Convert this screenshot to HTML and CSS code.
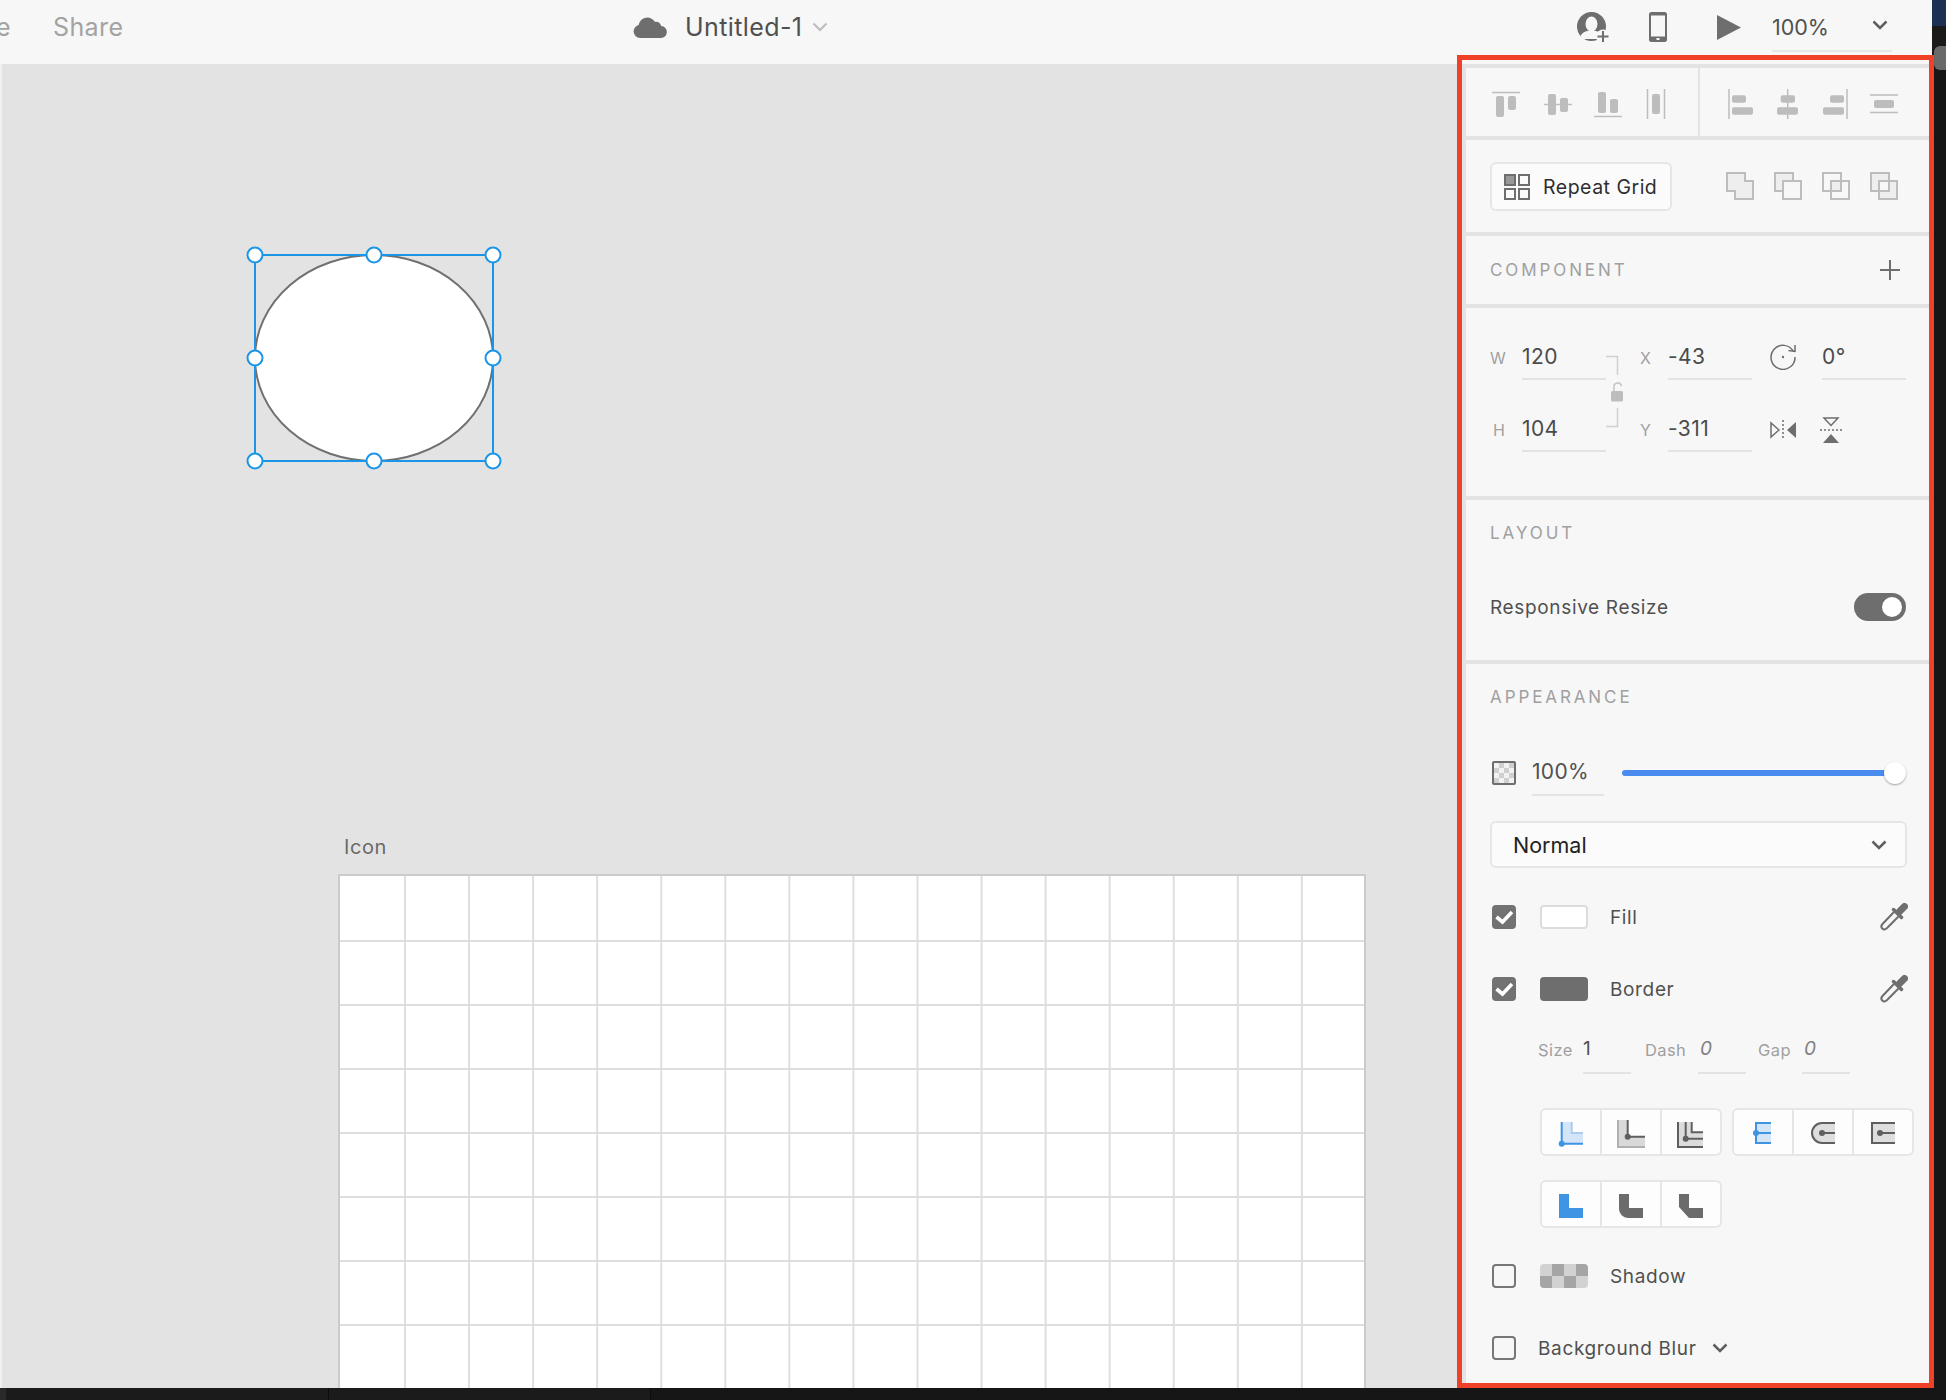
FILE: index.html
```html
<!DOCTYPE html>
<html lang="en">

<head>
  <meta charset="utf-8">
  <title>Untitled-1</title>
  <link rel="stylesheet" href="styles.css">
</head>

<body>
  <div id="app">
    <div id="toprow">
      <header id="topbar">
        <span class="tab tab-cut">e</span>
        <span class="tab">Share</span>
        <div id="doctitle">
          <svg class="cloud" width="34" height="22" viewBox="0 0 34 22"><path d="M7 22A6.6 6.6 0 0 1 5.6 9 9.6 9.6 0 0 1 14 1.4c3.400 0 6.300 1.700 7.800 4.400A5.800 5.800 0 0 1 28.200 10 6 6 0 0 1 27.500 22Z" fill="#6e6e6e"/></svg>
          <span id="docname">Untitled-1</span>
          <svg width="16" height="10" viewBox="0 0 16 10"><path d="M1.500 1.500 8 8l6.500-6.500" fill="none" stroke="#bdbdbd" stroke-width="2"/></svg>
        </div>
        <div id="topright">
          <svg class="person" width="33" height="30" viewBox="0 0 33 30"><circle cx="14.500" cy="14.500" r="14.500" fill="#6e6e6e"/><ellipse cx="14.500" cy="12" rx="6" ry="7.500" fill="#f7f7f7"/><path d="M3.500 24c2-4 6-5.500 11-5.500s9 1.500 11 5.500l-3 3H6Z" fill="#f7f7f7"/><circle cx="26" cy="24.500" r="7" fill="#f7f7f7"/><path d="M26 19v11M20.500 24.500h11" stroke="#6e6e6e" stroke-width="2"/></svg>
          <svg class="phone" width="18" height="30" viewBox="0 0 18 30"><rect width="18" height="30" rx="2.500" fill="#6e6e6e"/><rect x="2" y="3.500" width="14" height="21" fill="#f7f7f7"/><rect x="7.500" y="26" width="3" height="2" fill="#f7f7f7"/></svg>
          <svg class="play" width="24" height="25" viewBox="0 0 24 25"><path d="M0 0 24 12.500 0 25Z" fill="#6e6e6e"/></svg>
          <div id="zoomfield">
            <span>100%</span>
            <svg width="16" height="10" viewBox="0 0 16 10"><path d="M1.500 1.500 8 8l6.500-6.500" fill="none" stroke="#5f5f5f" stroke-width="2.500"/></svg>
          </div>
        </div>
      </header>
      <div id="topstrip"></div>
    </div>

    <div id="mainrow">
      <main id="canvas">
        <div id="canvasedge"></div>
        <svg id="selection" width="270" height="240" viewBox="0 0 270 240">
          <ellipse cx="134" cy="118" rx="119" ry="103" fill="#fff" stroke="#707070" stroke-width="2"/>
          <rect x="15" y="15" width="238" height="206" fill="none" stroke="#1b95e6" stroke-width="2"/>
          <g fill="#fff" stroke="#1b95e6" stroke-width="2">
            <circle cx="15" cy="15" r="7.500"/>
            <circle cx="134" cy="15" r="7.500"/>
            <circle cx="253" cy="15" r="7.500"/>
            <circle cx="15" cy="118" r="7.500"/>
            <circle cx="253" cy="118" r="7.500"/>
            <circle cx="15" cy="221" r="7.500"/>
            <circle cx="134" cy="221" r="7.500"/>
            <circle cx="253" cy="221" r="7.500"/>
          </g>
        </svg>
        <div id="artboardname">Icon</div>
        <div id="artboard"></div>
      </main>

      <aside id="panel">
        <section class="section sec-align">
          <div class="aligngroup group-a">
            <svg class="ico32" viewBox="0 0 32 32"><path d="M2 4.500h28" stroke="#bdbdbd" stroke-width="1.500"/><rect x="6" y="8" width="8" height="21" rx="2"/><rect x="18" y="8" width="8" height="14" rx="2"/></svg>
            <svg class="ico32" viewBox="0 0 32 32"><path d="M4 16.500h28" stroke="#bdbdbd" stroke-width="1.500"/><rect x="8" y="6" width="8" height="21" rx="2"/><rect x="20" y="10" width="8" height="14" rx="2"/></svg>
            <svg class="ico32" viewBox="0 0 32 32"><path d="M4 28.500h28" stroke="#bdbdbd" stroke-width="1.500"/><rect x="8" y="4" width="8" height="21" rx="2"/><rect x="20" y="11" width="8" height="14" rx="2"/></svg>
            <svg class="ico32" viewBox="0 0 32 32"><path d="M7.500 1v30M24.500 1v30" stroke="#bdbdbd" stroke-width="1.500"/><rect x="12" y="6" width="8" height="20" rx="2"/></svg>
          </div>
          <div class="aligngroup group-b">
            <svg class="ico32" viewBox="0 0 32 32"><path d="M5 1v30" stroke="#bdbdbd" stroke-width="1.500"/><rect x="8" y="7.300" width="14" height="7.500" rx="2"/><rect x="8" y="19.300" width="21" height="7.500" rx="2"/></svg>
            <svg class="ico32" viewBox="0 0 32 32"><path d="M15.700 1v30" stroke="#bdbdbd" stroke-width="1.500"/><rect x="8.700" y="7.300" width="14.300" height="7.500" rx="2"/><rect x="5" y="19.300" width="21" height="7.500" rx="2"/></svg>
            <svg class="ico32" viewBox="0 0 32 32"><path d="M27 1v30" stroke="#bdbdbd" stroke-width="1.500"/><rect x="10" y="7.300" width="14" height="7.500" rx="2"/><rect x="3" y="19.300" width="21" height="7.500" rx="2"/></svg>
            <svg class="ico32" viewBox="0 0 32 32"><path d="M2 7h28M2 24.500h28" stroke="#bdbdbd" stroke-width="1.500"/><rect x="6" y="12" width="20" height="8" rx="2"/></svg>
          </div>
        </section>

        <section class="section sec-repeat">
          <button class="repeatbtn">
            <svg width="26" height="26" viewBox="0 0 26 26"><g fill="none" stroke="#6e6e6e" stroke-width="2"><rect x="1" y="1" width="10" height="10" fill="#999"/><rect x="15" y="1" width="10" height="10"/><rect x="1" y="15" width="10" height="10"/><rect x="15" y="15" width="10" height="10"/></g></svg>
            <span>Repeat Grid</span>
          </button>
          <div class="boolgroup">
            <svg class="ico28" viewBox="0 0 28 28"><path d="M1 1h18v8h8v18H9v-8H1Z" fill="#eee" stroke="#bdbdbd" stroke-width="2"/></svg>
            <svg class="ico28" viewBox="0 0 28 28"><rect x="1" y="1" width="18" height="18" fill="#eee" stroke="#bdbdbd" stroke-width="2"/><rect x="9" y="9" width="18" height="18" fill="#f7f7f7" stroke="#bdbdbd" stroke-width="2"/></svg>
            <svg class="ico28" viewBox="0 0 28 28"><rect x="9" y="9" width="10" height="10" fill="#eee"/><g fill="none" stroke="#bdbdbd" stroke-width="2"><rect x="1" y="1" width="18" height="18"/><rect x="9" y="9" width="18" height="18"/></g></svg>
            <svg class="ico28" viewBox="0 0 28 28"><path d="M1 1h18v8H9v10H1Z" fill="#eee"/><path d="M19 9h8v18H9v-8h10Z" fill="#eee"/><g fill="none" stroke="#bdbdbd" stroke-width="2"><rect x="1" y="1" width="18" height="18"/><rect x="9" y="9" width="18" height="18"/></g></svg>
          </div>
        </section>

        <section class="section sec-component">
          <h2 class="heading">COMPONENT</h2>
          <svg width="20" height="20" viewBox="0 0 20 20"><path d="M10 0v20M0 10h20" stroke="#6e6e6e" stroke-width="2"/></svg>
        </section>

        <section class="section sec-transform">
          <div class="xform">
            <span class="xlabel lab-w">W</span>
            <span class="field f-w">120</span>
            <svg class="link" width="24" height="116" viewBox="0 0 24 116">
              <path d="M0 20.500h11.500V39M11.500 72v18.500H0" fill="none" stroke="#cfcfcf" stroke-width="1.500"/>
              <path d="M8 56v-5a3.800 3.800 0 0 1 7.500-1" fill="none" stroke="#c4c4c4" stroke-width="1.500"/>
              <rect x="5" y="55" width="12" height="10.500" rx="1.500" fill="#bdbdbd"/>
            </svg>
            <span class="xlabel lab-x">X</span>
            <span class="field f-x">-43</span>
            <svg class="rot" width="26" height="26" viewBox="0 0 26 26"><path d="M23.500 7.500A12 12 0 1 0 25 13" fill="none" stroke="#6e6e6e" stroke-width="1.500"/><path d="M18.500 6.500 25 7.500V1" fill="none" stroke="#6e6e6e" stroke-width="1.500"/><circle cx="13" cy="13" r="1.200" fill="#6e6e6e"/></svg>
            <span class="field f-r">0°</span>

            <span class="xlabel lab-h">H</span>
            <span class="field f-h">104</span>
            <span class="xlabel lab-y">Y</span>
            <span class="field f-y">-311</span>
            <div class="flips">
              <svg width="26" height="20" viewBox="0 0 26 20"><path d="M1 3v14l8-7Z" fill="none" stroke="#6e6e6e" stroke-width="1.500"/><path d="M26 2v16l-9-8Z" fill="#6e6e6e"/><path d="M13 0v20" stroke="#6e6e6e" stroke-width="1.500" stroke-dasharray="2 2"/></svg>
              <svg width="22" height="26" viewBox="0 0 22 26"><path d="M4 1h14l-7 7.500Z" fill="none" stroke="#6e6e6e" stroke-width="1.500"/><path d="M3 26h16l-8-9Z" fill="#6e6e6e"/><path d="M0 13h22" stroke="#6e6e6e" stroke-width="1.500" stroke-dasharray="2 2"/></svg>
            </div>
          </div>
        </section>

        <section class="section sec-layout">
          <h2 class="heading">LAYOUT</h2>
          <div class="resizerow">
            <span class="label">Responsive Resize</span>
            <span class="toggle"><span class="knob"></span></span>
          </div>
        </section>

        <section class="sec-appearance">
          <h2 class="heading">APPEARANCE</h2>

          <div class="opacityrow">
            <span class="checker"></span>
            <span class="opacityfield">100%</span>
            <div class="slider"><span class="sliderknob"></span></div>
          </div>

          <div class="select">
            <span>Normal</span>
            <svg width="16" height="10" viewBox="0 0 16 10"><path d="M1.500 1.500 8 8l6.500-6.500" fill="none" stroke="#5f5f5f" stroke-width="2.500"/></svg>
          </div>

          <div class="paintrow row-fill">
            <span class="check on"><svg width="24" height="24" viewBox="0 0 24 24"><path d="M4.500 12 10.500 17 20 7" fill="none" stroke="#fff" stroke-width="3.600"/></svg></span>
            <span class="swatch swatch-white"></span>
            <span class="label">Fill</span>
            <svg class="dropper" width="28" height="28" viewBox="0 0 28 28"><path d="M14 9 2.500 21c-1.800 2-1.200 3.500-.2 4.500s2.500 1.600 4.500-.2L18.500 13.500" fill="none" stroke="#6e6e6e" stroke-width="2"/><path d="M13.500 6.500l8 8" stroke="#6e6e6e" stroke-width="3.500" stroke-linecap="round"/><path d="M19.500 8.500 24.500 3.500" stroke="#6e6e6e" stroke-width="7" stroke-linecap="round"/></svg>
          </div>

          <div class="paintrow row-border">
            <span class="check on"><svg width="24" height="24" viewBox="0 0 24 24"><path d="M4.500 12 10.500 17 20 7" fill="none" stroke="#fff" stroke-width="3.600"/></svg></span>
            <span class="swatch swatch-gray"></span>
            <span class="label">Border</span>
            <svg class="dropper" width="28" height="28" viewBox="0 0 28 28"><path d="M14 9 2.500 21c-1.800 2-1.200 3.500-.2 4.500s2.500 1.600 4.500-.2L18.500 13.500" fill="none" stroke="#6e6e6e" stroke-width="2"/><path d="M13.500 6.500l8 8" stroke="#6e6e6e" stroke-width="3.500" stroke-linecap="round"/><path d="M19.500 8.500 24.500 3.500" stroke="#6e6e6e" stroke-width="7" stroke-linecap="round"/></svg>
          </div>

          <div class="strokerow">
            <span class="smalllabel sl-size">Size</span><span class="smallfield sf-size">1</span>
            <span class="smalllabel sl-dash">Dash</span><span class="smallfield sf-dash zero">0</span>
            <span class="smalllabel sl-gap">Gap</span><span class="smallfield sf-gap zero">0</span>
          </div>

          <div class="btnrow row-one">
            <div class="btngroup">
              <span class="btn"><svg class="ico32" viewBox="0 0 32 32"><path d="M6.700 6h10v11H28v10.700H6.700Z" fill="#d5e5f8"/><path d="M16.700 6v11H28" fill="none" stroke="#a9cdf0" stroke-width="2"/><path d="M6.700 6v21.700H28" fill="none" stroke="#3f93e3" stroke-width="2"/><circle cx="6.700" cy="27.700" r="3" fill="#3f93e3"/></svg></span>
              <span class="btn"><svg class="ico32" viewBox="0 0 32 32"><path d="M2 4h10.700v16.700H30V32H2Z" fill="#d9d9d9"/><path d="M3 4v27h27" fill="none" stroke="#b0b0b0" stroke-width="2"/><path d="M12.700 4v16.700H30" fill="none" stroke="#5f5f5f" stroke-width="2"/><circle cx="12.700" cy="20.700" r="3" fill="#5f5f5f"/></svg></span>
              <span class="btn"><svg class="ico32" viewBox="0 0 32 32"><path d="M3 6h13.700v10.300H28V31H3Z" fill="#dcdcdc"/><path d="M3 6v25h25M10.700 6v16.700H28M16.700 6v10.300H28" fill="none" stroke="#5f5f5f" stroke-width="2"/><circle cx="10.700" cy="22.700" r="3" fill="#5f5f5f"/></svg></span>
            </div>
            <div class="btngroup">
              <span class="btn"><svg class="ico32" viewBox="0 0 32 32"><path d="M9 7h15v20H9Z" fill="#d5e5f8"/><path d="M24 7H9v20h15M9 17h15" fill="none" stroke="#3f93e3" stroke-width="2"/><circle cx="9" cy="17" r="3" fill="#3f93e3"/></svg></span>
              <span class="btn"><svg class="ico32" viewBox="0 0 32 32"><path d="M28 7H15a10 10 0 0 0 0 20h13Z" fill="#dedede"/><path d="M28 7H15a10 10 0 0 0 0 20h13M15 17h13" fill="none" stroke="#5f5f5f" stroke-width="2"/><circle cx="15" cy="17" r="3" fill="#5f5f5f"/></svg></span>
              <span class="btn"><svg class="ico32" viewBox="0 0 32 32"><path d="M5 7h23v20H5Z" fill="#dedede"/><path d="M28 7H5v20h23M13 17h15" fill="none" stroke="#5f5f5f" stroke-width="2"/><circle cx="13" cy="17" r="3" fill="#5f5f5f"/></svg></span>
            </div>
          </div>

          <div class="btnrow row-two">
            <div class="btngroup">
              <span class="btn"><svg class="ico32" viewBox="0 0 32 32"><path d="M4 6h10v14h14v10H4Z" fill="#4094e4"/></svg></span>
              <span class="btn"><svg class="ico32" viewBox="0 0 32 32"><path d="M4 6h10v14h14v10H13a9 9 0 0 1-9-9Z" fill="#6b6b6b"/></svg></span>
              <span class="btn"><svg class="ico32" viewBox="0 0 32 32"><path d="M4 6h10v14h14v10H14L4 19Z" fill="#6b6b6b"/></svg></span>
            </div>
          </div>

          <div class="paintrow row-shadow">
            <span class="check"></span>
            <span class="swatch swatch-check"></span>
            <span class="label">Shadow</span>
          </div>

          <div class="paintrow row-blur">
            <span class="check check-tight"></span>
            <span class="label blurlabel">Background Blur</span>
            <svg width="16" height="10" viewBox="0 0 16 10"><path d="M1.500 1.500 8 8l6.500-6.500" fill="none" stroke="#5f5f5f" stroke-width="2.500"/></svg>
          </div>
        </section>
      </aside>

      <div id="rightstrip"></div>
    </div>

    <footer id="bottombar">
      <span class="seg seg-a"></span>
      <span class="seg seg-b"></span>
      <span class="seg seg-c"></span>
      <span class="seg seg-d"></span>
    </footer>

    <div id="thumb"></div>
    <div id="redframe"></div>
  </div>
</body>

</html>
```

FILE: styles.css
```css
html, body {
  margin: 0;
  padding: 0;
  background-color: #161616;
}

body {
  font-family: Inter, "Noto Sans", sans-serif;
  color: #505050;
}

h2 {
  margin: 0;
  font-weight: normal;
}

svg {
  display: block;
  flex: none;
}

#app {
  position: relative;
  width: 1946px;
  height: 1400px;
  display: flex;
  flex-direction: column;
  overflow: hidden;
}

/* top */

#toprow {
  display: flex;
  height: 64px;
}

#topbar {
  width: 1932px;
  display: flex;
  align-items: center;
  background-color: #f7f7f7;
  padding-bottom: 10px;
  box-sizing: border-box;
}

#topstrip {
  flex: 1;
  background: linear-gradient(#1c3054 26px, #1a1a1a 26px);
}

.tab {
  font-size: 25px;
  letter-spacing: .4px;
  color: #a3a3a3;
  margin-left: 41px;
  width: 70px;
}

.tab-cut {
  margin-left: -4px;
  width: 16px;
}

#doctitle {
  display: flex;
  align-items: center;
  margin-left: 510px;
  width: 255px;
}

.cloud {
  margin-right: 18px;
}

#docname {
  font-size: 25px;
  letter-spacing: .4px;
  color: #505050;
  margin-right: 10px;
}

#topright {
  display: flex;
  align-items: center;
  margin-left: auto;
  margin-right: 40px;
}

.person {
  margin-right: 39px;
}

.phone {
  margin-right: 50px;
}

.play {
  margin-right: 31px;
}

#zoomfield {
  position: relative;
  width: 120px;
  height: 42px;
  display: flex;
  align-items: center;
  justify-content: space-between;
  padding-right: 4px;
  box-sizing: border-box;
  border-bottom: 2px solid #e6e6e6;
  margin-top: 7px;
  font-size: 21.500px;
}

#zoomfield span {
  margin-top: -5px;
}

#zoomfield svg {
  margin-top: -10px;
}

/* middle */

#mainrow {
  display: flex;
  height: 1324px;
}

#canvas {
  position: relative;
  width: 1466px;
  background-color: #e3e3e3;
  overflow: hidden;
}

#canvasedge {
  width: 2px;
  height: 100%;
  background-color: #f0f0f0;
}

#selection {
  position: absolute;
  left: 240px;
  top: 176px;
}

#artboardname {
  position: absolute;
  left: 344px;
  top: 769px;
  font-size: 20px;
  letter-spacing: .6px;
  line-height: 28px;
  color: #6a6a6a;
}

#artboard {
  position: absolute;
  left: 338px;
  top: 810px;
  width: 1024px;
  height: 600px;
  border: 2px solid #cbcbcb;
  background-color: #fff;
}

#artboard::before {
  content: "";
  position: absolute;
  left: 64px;
  top: 0;
  right: 0;
  bottom: 0;
  background-image: linear-gradient(to right, #dedede 1.7px, transparent 1.7px);
  background-size: 64.07px 100%;
}

#artboard::after {
  content: "";
  position: absolute;
  left: 0;
  top: 64px;
  right: 0;
  bottom: 0;
  background-image: linear-gradient(to bottom, #dedede 1.7px, transparent 1.7px);
  background-size: 100% 64px;
}

#panel {
  width: 463px;
  background-color: #f7f7f7;
  border-top: 4px solid #e3e3e3;
  box-sizing: border-box;
  display: flex;
  flex-direction: column;
}

#rightstrip {
  flex: 1;
  background-color: #161616;
}

.section {
  border-bottom: 4px solid #e3e3e3;
  box-sizing: border-box;
}

.heading {
  font-size: 17px;
  line-height: 24px;
  letter-spacing: 2.9px;
  color: #a0a0a0;
}

.label {
  font-size: 19px;
  letter-spacing: .65px;
  line-height: 24px;
  padding-top: 2px;
  color: #505050;
}

/* align buttons */

.sec-align {
  height: 72px;
  display: flex;
}

.aligngroup {
  display: flex;
  padding-top: 20px;
  box-sizing: border-box;
}

.group-a {
  width: 234px;
  gap: 18px;
  padding-left: 24px;
  border-right: 2px solid #e3e3e3;
}

.group-b {
  gap: 16px;
  padding-left: 24px;
}

.ico32 {
  width: 32px;
  height: 32px;
  overflow: visible;
}

.aligngroup .ico32 {
  fill: #bdbdbd;
}

/* repeat grid */

.sec-repeat {
  height: 96px;
  display: flex;
  align-items: flex-start;
  padding: 22px 0 0 24px;
}

.repeatbtn {
  width: 182px;
  height: 49px;
  display: flex;
  align-items: center;
  gap: 13px;
  padding: 0 0 0 12px;
  border: 2px solid #e6e6e6;
  border-radius: 6px;
  background-color: #fbfbfb;
  font-family: inherit;
  font-size: 19.500px;
  letter-spacing: .5px;
  color: #2e2e2e;
}

.boolgroup {
  display: flex;
  gap: 20px;
  margin: 10px 0 0 54px;
}

.ico28 {
  width: 28px;
  height: 28px;
}

/* component */

.sec-component {
  height: 72px;
  display: flex;
  align-items: center;
  justify-content: space-between;
  padding: 0 29px 0 24px;
}

/* w h x y */

.sec-transform {
  height: 192px;
  padding: 28px 0 0 24px;
}

.xform {
  display: grid;
  grid-template-columns: 16px 16px 84px 34px 28px 84px 70px 84px;
  grid-template-rows: 44px 44px;
  row-gap: 28px;
  align-items: center;
}

.xlabel {
  font-size: 16px;
  line-height: 44px;
  color: #a0a0a0;
}

.lab-w { grid-area: 1 / 1 / 2 / 3; }
.lab-h { grid-area: 2 / 1 / 3 / 3; padding-left: 3px; }
.lab-x { grid-area: 1 / 5; }
.lab-y { grid-area: 2 / 5; }

.field {
  height: 44px;
  box-sizing: border-box;
  border-bottom: 2px solid #e3e3e3;
  font-size: 21px;
  letter-spacing: .4px;
  line-height: 41px;
  color: #4b4b4b;
}

.f-w { grid-area: 1 / 3; }
.f-h { grid-area: 2 / 3; }
.f-x { grid-area: 1 / 6; }
.f-y { grid-area: 2 / 6; }
.f-r { grid-area: 1 / 8; }

.link {
  grid-area: 1 / 4 / 3 / 5;
  align-self: start;
}

.rot {
  grid-area: 1 / 7;
  margin: 0 0 2px 18px;
}

.flips {
  grid-area: 2 / 7 / 3 / 9;
  display: flex;
  align-items: center;
  gap: 24px;
  padding: 0 0 0 18px;
}

/* layout */

.sec-layout {
  height: 164px;
  padding: 21px 23px 0 24px;
}

.resizerow {
  display: flex;
  align-items: center;
  justify-content: space-between;
  margin-top: 48px;
}

.toggle {
  width: 52px;
  height: 28px;
  border-radius: 14px;
  background-color: #6e6e6e;
  display: flex;
  align-items: center;
  justify-content: flex-end;
  padding-right: 4px;
  box-sizing: border-box;
}

.knob {
  width: 20px;
  height: 20px;
  border-radius: 50%;
  background-color: #fff;
}

/* appearance */

.sec-appearance {
  flex: 1;
  padding: 21px 0 0 24px;
}

.opacityrow {
  display: flex;
  align-items: center;
  height: 46px;
  margin-top: 41px;
  padding-left: 2px;
}

.checker {
  width: 24px;
  height: 24px;
  box-sizing: border-box;
  border: 2px solid #6e6e6e;
  border-radius: 2px;
  margin-right: 16px;
  background-color: #f2f2f2;
  background-image: conic-gradient(#cfcfcf 25%, transparent 25% 50%, #cfcfcf 50% 75%, transparent 75%);
  background-size: 10px 10px;
}

.opacityfield {
  width: 72px;
  height: 46px;
  box-sizing: border-box;
  border-bottom: 2px solid #e3e3e3;
  font-size: 21px;
  letter-spacing: .3px;
  line-height: 44px;
  color: #505050;
}

.slider {
  position: relative;
  width: 284px;
  height: 6px;
  border-radius: 3px;
  margin-left: 18px;
  background-color: #4a8bf0;
}

.sliderknob {
  position: absolute;
  right: 0;
  top: -8px;
  width: 22px;
  height: 22px;
  border-radius: 50%;
  background-color: #fff;
  box-shadow: 0 1px 2px rgba(0, 0, 0, .35);
}

.select {
  width: 417px;
  height: 47px;
  margin-top: 25px;
  box-sizing: border-box;
  border: 2px solid #e6e6e6;
  border-radius: 6px;
  background-color: #fbfbfb;
  display: flex;
  align-items: center;
  justify-content: space-between;
  padding: 0 18px 0 21px;
  font-size: 21.500px;
  color: #222;
}

.paintrow {
  display: flex;
  align-items: center;
  height: 24px;
  padding-left: 2px;
}

.row-fill { margin-top: 37px; }
.row-border { margin-top: 48px; }
.row-shadow { margin-top: 36px; }
.row-blur { margin-top: 48px; }

.check {
  width: 24px;
  height: 24px;
  box-sizing: border-box;
  border: 2px solid #777;
  border-radius: 4px;
  margin-right: 24px;
}

.check-tight {
  margin-right: 22px;
}

.check.on {
  border: 0;
  background-color: #727272;
}

.swatch {
  width: 48px;
  height: 24px;
  box-sizing: border-box;
  border-radius: 4px;
  margin-right: 22px;
}

.swatch-white {
  background-color: #fff;
  border: 2px solid #dcdcdc;
}

.swatch-gray {
  background-color: #6e6e6e;
}

.swatch-check {
  background-color: #d2d2d2;
  background-image: conic-gradient(#a5a5a5 25%, transparent 25% 50%, #a5a5a5 50% 75%, transparent 75%);
  background-size: 24px 24px;
}

.dropper {
  margin-left: auto;
  margin-right: 21px;
}

.strokerow {
  display: flex;
  height: 46px;
  margin-top: 27px;
}

.smalllabel {
  font-size: 16.500px;
  letter-spacing: .4px;
  line-height: 44px;
  color: #a0a0a0;
}

.smallfield {
  width: 48px;
  height: 46px;
  box-sizing: border-box;
  border-bottom: 2px solid #e3e3e3;
  font-size: 19px;
  line-height: 42px;
  color: #505050;
}

.zero {
  font-style: italic;
  color: #808080;
  padding-left: 2px;
}

.sl-size { margin-left: 48px; width: 45px; }
.sl-dash { margin-left: 14px; width: 53px; }
.sl-gap { margin-left: 12px; width: 44px; }

.btnrow {
  display: flex;
  gap: 10px;
  margin-left: 50px;
}

.row-one { margin-top: 34px; }
.row-two { margin-top: 24px; }

.btngroup {
  width: 182px;
  height: 48px;
  display: flex;
  box-sizing: border-box;
  border: 2px solid #e6e6e6;
  border-radius: 6px;
  background-color: #fdfdfd;
}

.btn {
  flex: 1;
  display: flex;
  align-items: center;
  justify-content: center;
  border-left: 2px solid #e6e6e6;
}

.btn:first-child {
  border-left: 0;
}

.blurlabel {
  margin-right: 16px;
}

/* window chrome */

#bottombar {
  flex: 1;
  display: flex;
}

.seg {
  height: 100%;
  background-color: #1b1b1b;
  border-right: 1px solid #0c0c0c;
}

.seg-a { width: 6px; background-color: #2a2a2a; border: 0; }
.seg-b { width: 322px; }
.seg-c { width: 321px; }
.seg-d { flex: 1; background-color: #161616; border: 0; }

#thumb {
  position: absolute;
  left: 1934px;
  top: 46px;
  width: 12px;
  height: 24px;
  border-radius: 6px 0 0 6px;
  background-color: #6a6a6a;
}

#redframe {
  position: absolute;
  left: 1457px;
  top: 55px;
  width: 477px;
  height: 1333px;
  box-sizing: border-box;
  border: 5px solid #ef4127;
}
```
